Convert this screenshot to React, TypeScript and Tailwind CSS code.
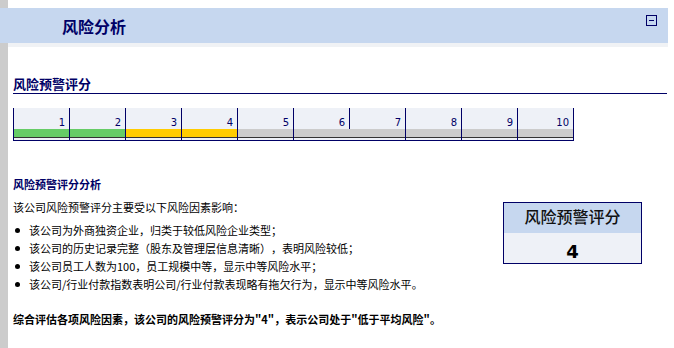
import type { ReactNode } from "react";

const NAVY = "border-[#000066]";

const scale = [
  { n: 1, bar: "bg-[#66cc66]" },
  { n: 2, bar: "bg-[#66cc66]" },
  { n: 3, bar: "bg-[#ffcc00]" },
  { n: 4, bar: "bg-[#ffcc00]" },
  { n: 5, bar: "bg-[#cccccc]" },
  { n: 6, bar: "bg-[#cccccc]" },
  { n: 7, bar: "bg-[#cccccc]" },
  { n: 8, bar: "bg-[#cccccc]" },
  { n: 9, bar: "bg-[#cccccc]" },
  { n: 10, bar: "bg-[#cccccc]" },
];

const factors = [
  "该公司为外商独资企业，归类于较低风险企业类型；",
  "该公司的历史记录完整（股东及管理层信息清晰），表明风险较低；",
  "该公司员工人数为100，员工规模中等，显示中等风险水平；",
  "该公司/行业付款指数表明公司/行业付款表现略有拖欠行为，显示中等风险水平。",
];

// full-width punctuation keeps a whole em like the original report
function Zh({ text }: { text: string }) {
  const parts: ReactNode[] = text.split(/([，；：。（）])/).map((p, i) => {
    if (!/^[，；：。（）]$/.test(p)) return p;
    return (
      <span key={i} className={`inline-block w-[1em] ${p === "（" ? "text-right" : "text-left"}`}>
        {p}
      </span>
    );
  });
  return <>{parts}</>;
}

function ScaleCell({ n, bar, split }: { n: number; bar: string; split: boolean }) {
  // the divider before "7" stops above the colour bar in the original report
  return (
    <div className={`flex w-[56px] flex-col bg-[#eef1f7] ${split ? "" : `border-l ${NAVY}`}`}>
      <div
        className={`flex h-[21px] items-end justify-end pr-[4px] text-[10px] leading-[12px] text-[#000066] ${
          split ? `border-l ${NAVY}` : ""
        }`}
      >
        {n}
      </div>
      <div className={`h-[8px] ${bar}`} />
      <div className="h-px bg-[#333333]" />
      <div className="h-[2px]" />
    </div>
  );
}

export default function App() {
  return (
    <div
      lang="zh-CN"
      className="h-[348px] w-[674px] overflow-hidden bg-white font-['DejaVu_Sans','Noto_Sans_CJK_SC',sans-serif] text-black"
    >
      <div className="h-full border-l-8 border-[#cccccc] pt-2">
        <div className="-ml-2 mr-[6px] flex h-[35px] items-start justify-between bg-[#c6d7ef]">
          <h2 className="ml-[62px] mt-[12px] text-[16px] font-bold leading-[16px] text-[#000066]">风险分析</h2>
          <div className={`mr-[11px] mt-[7px] flex h-[11px] w-[11px] items-center justify-center border ${NAVY}`}>
            <div className="h-px w-[5px] bg-[#000066]" />
          </div>
        </div>
        <div className="mr-[6px] h-[4px] bg-[#f0f2f5]" />

        <div className="pl-[5px] pr-[7px]">
          <h3 className={`mt-[30px] border-b ${NAVY} text-[13px] font-bold leading-[16px] text-[#000066]`}>
            风险预警评分
          </h3>

          <div className={`mt-[14px] flex w-fit border-b border-r ${NAVY}`}>
            {scale.map((c) => (
              <ScaleCell key={c.n} n={c.n} bar={c.bar} split={c.n === 7} />
            ))}
          </div>

          <div className="mt-[34px] flex justify-between">
            <div className="font-['Noto_Sans_CJK_SC','DejaVu_Sans',sans-serif] text-[11px] leading-[18px]">
              <h4 className="font-bold text-[#000066]">风险预警评分分析</h4>
              <p className="mt-[5px]">
                <Zh text="该公司风险预警评分主要受以下风险因素影响：" />
              </p>
              <ul className="mt-[5px]">
                {factors.map((f) => (
                  <li key={f} className="flex items-center gap-[9px]">
                    <span className="ml-[2px] mt-px h-[5px] w-[5px] rounded-full bg-black" />
                    <span>
                      <Zh text={f} />
                    </span>
                  </li>
                ))}
              </ul>
              <p className="mt-[17px] font-bold">
                <Zh text={'综合评估各项风险因素，该公司的风险预警评分为"4"，表示公司处于"低于平均风险"。'} />
              </p>
            </div>

            <div className={`mr-[25px] mt-[27px] h-fit w-[139px] border ${NAVY}`}>
              <div className="flex h-[30px] items-center justify-center bg-[#c6d7ef] text-[16px] font-medium text-[#111111]">
                风险预警评分
              </div>
              <div className="h-[30px] bg-[#eef1f7] pt-[10px] text-center text-[18px] font-bold leading-[18px]">
                4
              </div>
            </div>
          </div>
        </div>
      </div>
    </div>
  );
}
